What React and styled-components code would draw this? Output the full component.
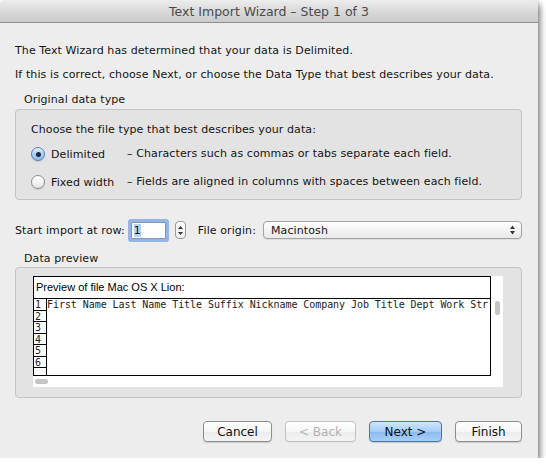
import React from 'react';
import styled, { createGlobalStyle } from 'styled-components';

const Global = createGlobalStyle`
  html, body { margin: 0; padding: 0; background: #ffffff; }
  body { font-family: "DejaVu Sans", "Lucida Grande", sans-serif; }
  * { box-sizing: border-box; }
`;

const Window = styled.div`
  width: 538px;
  height: 458px;
  background: #ededed;
  box-shadow: 2px 3px 6px rgba(0, 0, 0, 0.55);
  border-radius: 5px 5px 0 0;
  display: flex;
  flex-direction: column;
  overflow: hidden;
`;

const TitleBar = styled.div`
  height: 23px;
  flex: none;
  display: flex;
  align-items: center;
  justify-content: center;
  background: linear-gradient(#ededed, #d6d6d6 60%, #cbcbcb);
  border-bottom: 1px solid #8e8e8e;
  font-size: 12.5px;
  color: #4a4a4a;
`;

const Body = styled.div`
  flex: 1;
  display: flex;
  flex-direction: column;
  padding: 20px 16px 0 15px;
  color: #141414;
  font-size: 11px;
  letter-spacing: 0.1px;
`;

const Para = styled.p`
  margin: ${(p) => p.$top || 0}px 0 0 0;
  line-height: 16px;
`;

const GroupLabel = styled.div`
  margin-top: ${(p) => p.$top}px;
  padding-left: 9px;
  line-height: 16px;
`;

const Group = styled.div`
  margin-top: ${(p) => p.$top || 0}px;
  border: 1px solid #c4c4c4;
  border-radius: 4px;
  background: #e3e3e3;
  padding: ${(p) => p.$pad};
`;

const OptionGrid = styled.div`
  display: grid;
  grid-template-columns: 96px 1fr;
  row-gap: 8px;
  margin-top: 6px;
  align-items: center;
`;

const RadioLabel = styled.label`
  display: flex;
  align-items: center;
  gap: 6px;
  height: 20px;
`;

const Radio = styled.span`
  width: 14px;
  height: 14px;
  border-radius: 50%;
  border: 1px solid ${(p) => (p.$on ? '#5a7fae' : '#8d8d8d')};
  background: ${(p) =>
    p.$on
      ? 'linear-gradient(#e2eefc, #a9cdf5 55%, #8dbdf1)'
      : 'linear-gradient(#ffffff, #f0f0f0 60%, #e2e2e2)'};
  box-shadow: 0 1px 1px rgba(0, 0, 0, 0.12);
  display: flex;
  align-items: center;
  justify-content: center;
  &::after {
    content: '';
    display: ${(p) => (p.$on ? 'block' : 'none')};
    width: 5px;
    height: 5px;
    border-radius: 50%;
    background: #1c2a3c;
  }
`;

const Desc = styled.span`
  line-height: 20px;
`;

const ImportRow = styled.div`
  margin-top: 19px;
  height: 22px;
  display: flex;
  align-items: center;
`;

const NumInput = styled.div`
  margin-left: 6px;
  width: 35px;
  height: 17px;
  background: #fff;
  border: 1px solid #7f96b5;
  box-shadow: 0 0 0 3px rgba(120, 160, 225, 0.75);
  border-radius: 1px;
  font-size: 11px;
  line-height: 15px;
  padding-left: 2px;
  & span {
    background: #b5d3f9;
  }
`;

const Stepper = styled.div`
  margin-left: 9px;
  width: 11px;
  height: 18px;
  border: 1px solid #999;
  border-radius: 4px;
  background: linear-gradient(#ffffff, #ececec);
  display: flex;
  align-items: center;
  justify-content: center;
`;

const OriginLabel = styled.span`
  margin-left: 12px;
`;

const Select = styled.div`
  margin-left: 7px;
  flex: 1;
  height: 18px;
  border: 1px solid #a3a3a3;
  border-radius: 4px;
  background: linear-gradient(#ffffff, #f3f3f3 50%, #e9e9e9);
  box-shadow: 0 1px 1px rgba(0, 0, 0, 0.08);
  display: flex;
  align-items: center;
  justify-content: space-between;
  padding: 0 6px 0 7px;
  font-size: 11px;
`;

const Pane = styled.div`
  width: 470px;
  display: grid;
  grid-template-columns: 458px 12px;
  grid-template-rows: 23px 77px 11px;
  background: #fff;
`;

const PaneHead = styled.div`
  grid-column: 1;
  grid-row: 1;
  border: 1px solid #000;
  font-family: "Liberation Sans", Arial, sans-serif;
  font-size: 11px;
  letter-spacing: 0;
  line-height: 20px;
  padding-left: 2px;
  color: #000;
`;

const List = styled.div`
  grid-column: 1;
  grid-row: 2;
  border: 1px solid #000;
  border-top: none;
  overflow: hidden;
  font-family: "DejaVu Sans Mono", monospace;
  font-size: 10px;
  letter-spacing: -0.06px;
  color: #222;
`;

const Line = styled.div`
  display: flex;
  height: 11.5px;
  line-height: 11px;
  white-space: nowrap;
`;

const NumCell = styled.span`
  flex: none;
  width: 13px;
  border-right: 1px solid #000;
  border-bottom: 1px solid #000;
  padding-left: 1px;
`;

const VTrack = styled.div`
  grid-column: 2;
  grid-row: 2;
  display: flex;
  justify-content: center;
  padding-top: 2px;
`;

const HTrack = styled.div`
  grid-column: 1;
  grid-row: 3;
  display: flex;
  align-items: center;
  padding-left: 2px;
`;

const Thumb = styled.div`
  width: ${(p) => p.$w}px;
  height: ${(p) => p.$h}px;
  border-radius: 4px;
  background: #c4c4c4;
`;

const ButtonRow = styled.div`
  margin-top: 23px;
  display: flex;
  justify-content: flex-end;
  gap: 13px;
`;

const Button = styled.button`
  width: ${(p) => p.$w}px;
  height: 21px;
  border-radius: 4px;
  font-family: "DejaVu Sans", sans-serif;
  font-size: 12px;
  padding: 0;
  border: 1px solid ${(p) => (p.$primary ? '#4f74a8' : p.$disabled ? '#c2c2c2' : '#8e8e8e')};
  color: ${(p) => (p.$disabled ? '#b4b4b4' : '#111')};
  background: ${(p) =>
    p.$primary
      ? 'linear-gradient(#d2e6fb, #a5cbf4 50%, #8ab9ef 51%, #a7d0f7)'
      : 'linear-gradient(#ffffff, #f6f6f6 50%, #ececec 51%, #f4f4f4)'};
  box-shadow: 0 1px 1px rgba(0, 0, 0, ${(p) => (p.$disabled ? 0.05 : 0.15)});
`;

const rows = ['1', '2', '3', '4', '5', '6', ''];

export default function App() {
  return (
    <>
      <Global />
      <Window>
        <TitleBar>Text Import Wizard – Step 1 of 3</TitleBar>
        <Body>
          <Para>The Text Wizard has determined that your data is Delimited.</Para>
          <Para $top={8}>
            If this is correct, choose Next, or choose the Data Type that best describes your data.
          </Para>
          <GroupLabel $top={9}>Original data type</GroupLabel>
          <Group $top={1} $pad="12px 15px 7px 15px">
            <Para>Choose the file type that best describes your data:</Para>
            <OptionGrid>
              <RadioLabel>
                <Radio $on />
                Delimited
              </RadioLabel>
              <Desc>– Characters such as commas or tabs separate each field.</Desc>
              <RadioLabel>
                <Radio />
                Fixed width
              </RadioLabel>
              <Desc>– Fields are aligned in columns with spaces between each field.</Desc>
            </OptionGrid>
          </Group>
          <ImportRow>
            <span>Start import at row:</span>
            <NumInput>
              <span>1</span>
            </NumInput>
            <Stepper>
              <svg width="5" height="11" viewBox="0 0 5 11">
                <path d="M2.5 1 L5 4 L0 4 Z" fill="#333" />
                <path d="M2.5 10 L5 7 L0 7 Z" fill="#333" />
              </svg>
            </Stepper>
            <OriginLabel>File origin:</OriginLabel>
            <Select>
              <span>Macintosh</span>
              <svg width="5" height="10" viewBox="0 0 5 10">
                <path d="M2.5 0.5 L5 4 L0 4 Z" fill="#333" />
                <path d="M2.5 9.5 L5 6 L0 6 Z" fill="#333" />
              </svg>
            </Select>
          </ImportRow>
          <GroupLabel $top={10}>Data preview</GroupLabel>
          <Group $pad="8px 17px 10px 17px">
            <Pane>
              <PaneHead>Preview of file Mac OS X Lion:</PaneHead>
              <List>
                {rows.map((n, i) => (
                  <Line key={i}>
                    <NumCell>{n}</NumCell>
                    {i === 0 && (
                      <span>First Name Last Name Title Suffix Nickname Company Job Title Dept Work Str</span>
                    )}
                  </Line>
                ))}
              </List>
              <VTrack>
                <Thumb $w={5} $h={14} />
              </VTrack>
              <HTrack>
                <Thumb $w={13} $h={5} />
              </HTrack>
            </Pane>
          </Group>
          <ButtonRow>
            <Button $w={69}>Cancel</Button>
            <Button $w={71} $disabled>
              &lt; Back
            </Button>
            <Button $w={73} $primary>
              Next &gt;
            </Button>
            <Button $w={67}>Finish</Button>
          </ButtonRow>
        </Body>
      </Window>
    </>
  );
}
